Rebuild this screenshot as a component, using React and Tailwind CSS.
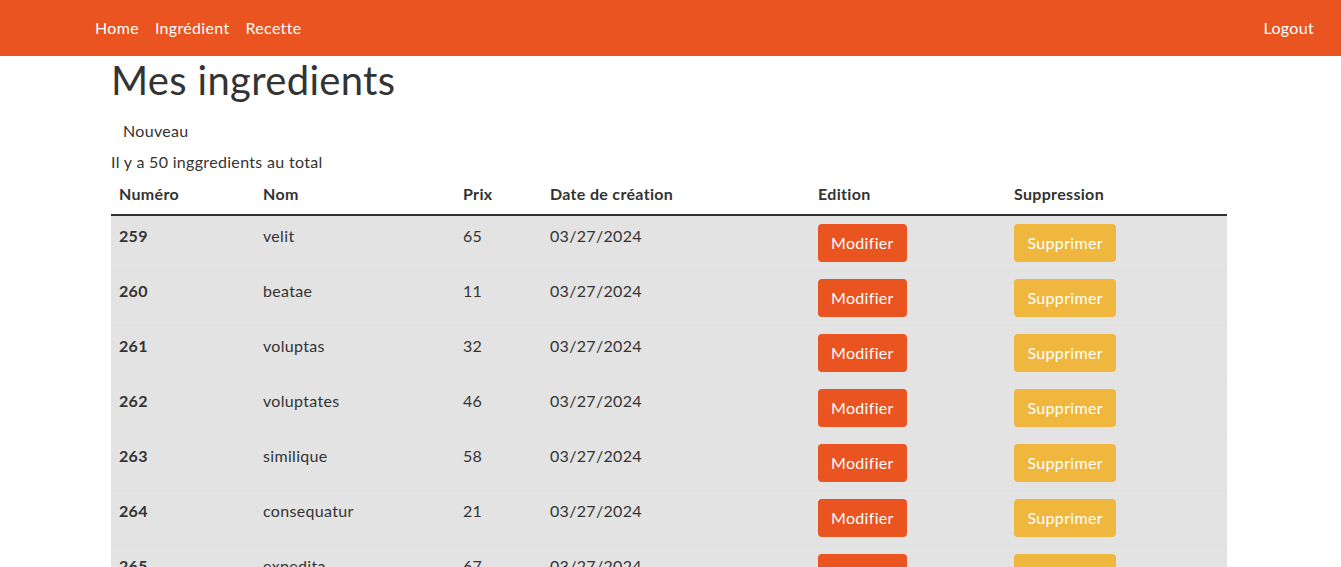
import React from "react";

const rows = [
  ["259", "velit", "65"],
  ["260", "beatae", "11"],
  ["261", "voluptas", "32"],
  ["262", "voluptates", "46"],
  ["263", "similique", "58"],
  ["264", "consequatur", "21"],
  ["265", "expedita", "67"],
  ["266", "dolores", "40"],
];

export default function App() {
  return (
    <div className="min-h-screen bg-white text-[#333] text-[16px] leading-6 tracking-[0.02em]" style={{ fontFamily: "Lato, 'Open Sans', sans-serif" }}>
      <nav className="h-14 bg-[#E95420] flex items-center justify-between pl-[87px] pr-[19px]">
        <div className="flex">
          <a className="px-2 py-2 text-white">Home</a>
          <a className="px-2 py-2 text-white">Ingrédient</a>
          <a className="px-2 py-2 text-white">Recette</a>
        </div>
        <a className="px-2 py-2 text-white">Logout</a>
      </nav>
      <div className="w-[1116px] ml-[111px]">
        <h1 className="text-[40px] leading-[48px] mb-2 font-normal">Mes ingredients</h1>
        <button className="px-3 py-[7px] leading-6 text-[#333]">Nouveau</button>
        <p>Il y a 50 inggredients au total</p>
        <table className="w-[1116px] table-fixed border-collapse text-left">
          <colgroup>
            <col className="w-[144px]" />
            <col className="w-[200px]" />
            <col className="w-[87px]" />
            <col className="w-[268px]" />
            <col className="w-[196px]" />
            <col className="w-[221px]" />
          </colgroup>
          <thead>
            <tr className="border-b-2 border-[#333]">
              <th className="p-2 font-bold">Numéro</th>
              <th className="p-2 font-bold">Nom</th>
              <th className="p-2 font-bold">Prix</th>
              <th className="p-2 font-bold">Date de création</th>
              <th className="p-2 font-bold">Edition</th>
              <th className="p-2 font-bold">Suppression</th>
            </tr>
          </thead>
          <tbody>
            {rows.map(([n, nom, prix]) => (
              <tr key={n} className="bg-[#e3e3e3] border-b border-[#e0e0e0] align-top">
                <td className="p-2 font-bold">{n}</td>
                <td className="p-2">{nom}</td>
                <td className="p-2">{prix}</td>
                <td className="p-2">03/27/2024</td>
                <td className="p-2">
                  <button className="bg-[#E95420] text-white rounded px-[13px] py-[7px] leading-6">Modifier</button>
                </td>
                <td className="p-2">
                  <button className="bg-[#EFB73E] text-white rounded px-[13.5px] py-[7px] leading-6">Supprimer</button>
                </td>
              </tr>
            ))}
          </tbody>
        </table>
      </div>
    </div>
  );
}
